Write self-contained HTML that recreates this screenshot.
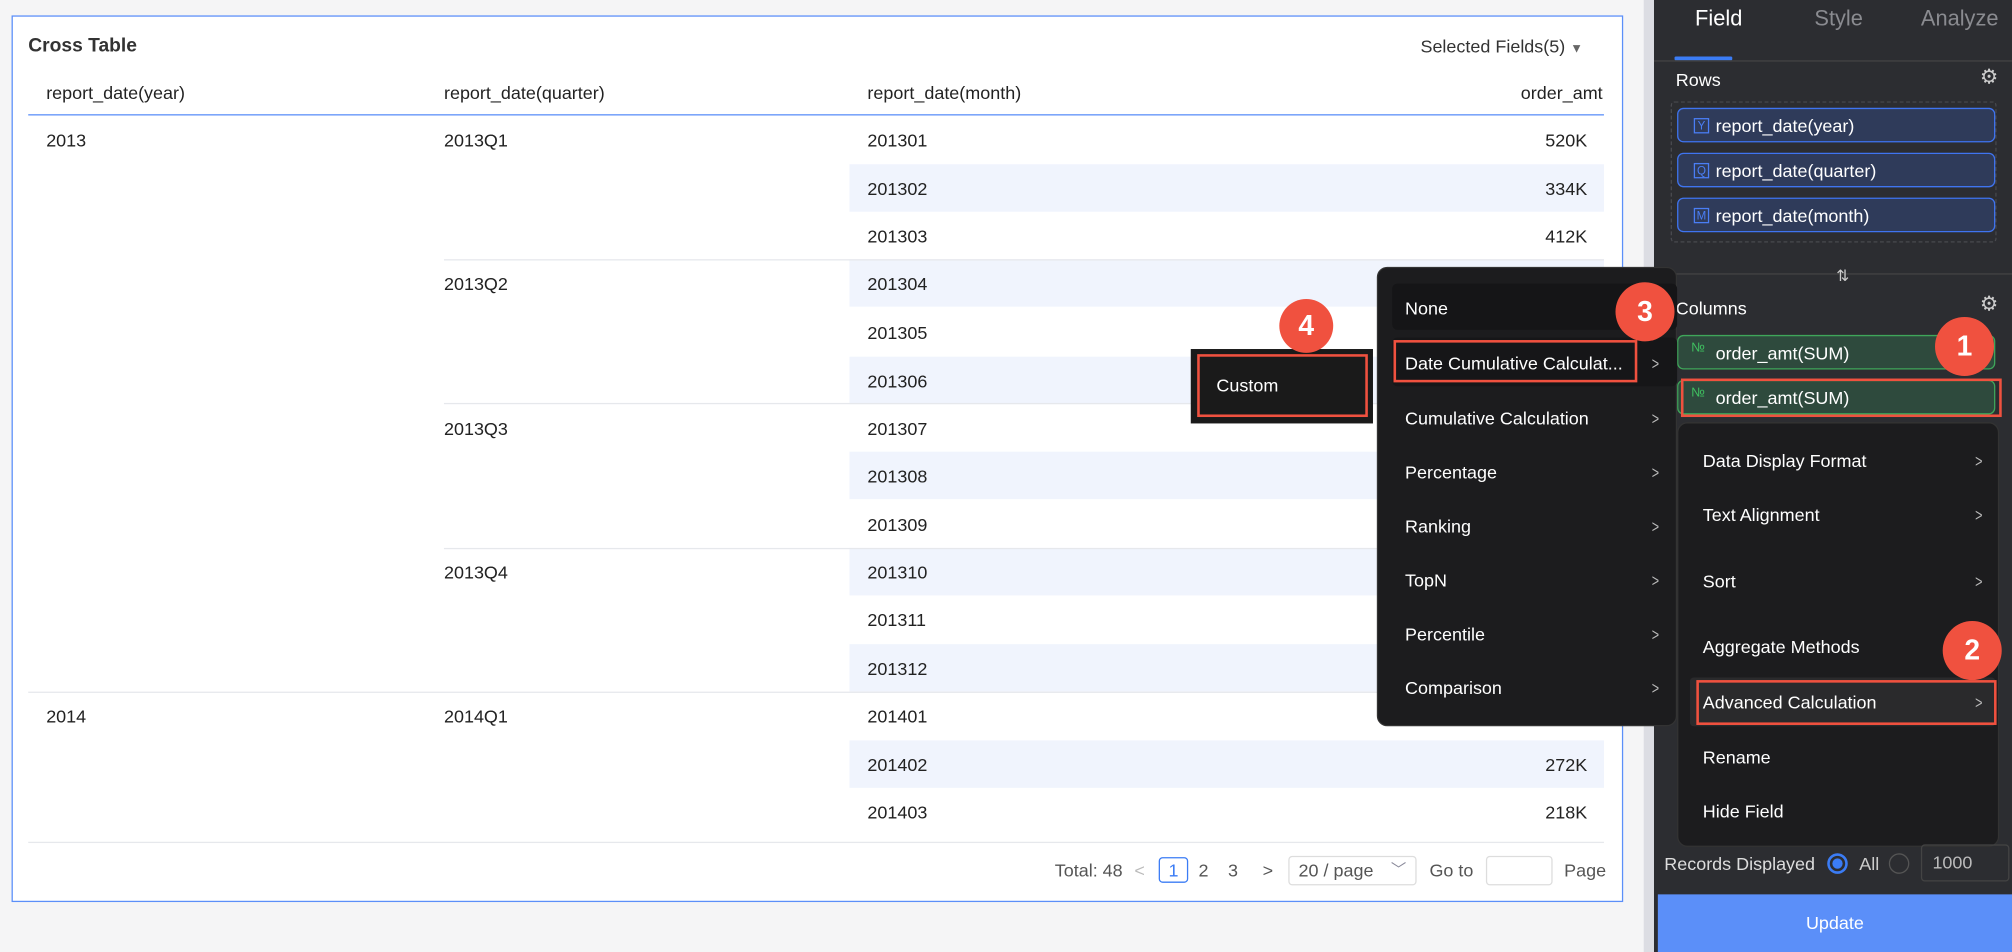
<!DOCTYPE html>
<html><head><meta charset="utf-8"><style>
*{margin:0;padding:0;box-sizing:border-box}
html,body{width:2012px;height:952px;overflow:hidden;background:#f5f5f6}
#w{position:absolute;left:0;top:0;width:1568px;height:742px;transform:scale(1.28316);transform-origin:0 0;font-family:"Liberation Sans",sans-serif;font-size:14px;color:#222}
.a{position:absolute;white-space:nowrap}
.t{position:absolute;white-space:nowrap;line-height:18px}
.sh{position:absolute;left:662px;width:588px;height:37px;background:#f0f4fd}
.hl{position:absolute;height:1px;background:#e6e8ec}
.pill{position:absolute;left:1307px;width:248px;height:27px;border-radius:5px;color:#fff;font-size:14px;line-height:27px;padding-left:29px}
.pb{background:#2f3b5a;border:1px solid #3f74f0}
.pg{background:#2e4a3d;border:1px solid #3fa65a}
.ic{position:absolute;left:12px;top:7px;width:12px;height:12px;border:1px solid #4a7ef5;color:#4a7ef5;font-size:9px;line-height:10px;text-align:center}
.no{position:absolute;left:10px;top:0;color:#3fc060;font-size:10px;line-height:20px}
.mi{position:absolute;color:#fff;font-size:14px;line-height:18px}
.ch{position:absolute;color:#bbb;font-size:14px;line-height:18px;transform:scaleX(.7)}
.bd{position:absolute;border-radius:50%;background:#f0513f;color:#fff;font-weight:bold;font-size:22px;text-align:center}
</style></head><body><div id="w">
<div class="a" style="left:9px;top:12px;width:1256px;height:691px;background:#fff;border:1px solid #5b8ff9"></div>
<div class="t" style="left:22px;top:27px;font-size:15px;font-weight:bold;color:#333">Cross Table</div>
<div class="t" style="left:1107px;top:27px;color:#333;font-size:14px">Selected Fields(5) <span style="font-size:10px;color:#666">▼</span></div>
<div class="t" style="left:36px;top:63px">report_date(year)</div>
<div class="t" style="left:346px;top:63px">report_date(quarter)</div>
<div class="t" style="left:676px;top:63px">report_date(month)</div>
<div class="t" style="left:1172px;top:63px;width:77px;text-align:right">order_amt</div>
<div class="a" style="left:22px;top:89px;width:1228px;height:1px;background:#5b8ff9"></div>
<div class="sh" style="top:128px"></div><div class="sh" style="top:202px"></div><div class="sh" style="top:278px"></div><div class="sh" style="top:352px"></div><div class="sh" style="top:427px"></div><div class="sh" style="top:502px"></div><div class="sh" style="top:577px"></div>
<div class="hl" style="left:346px;top:202px;width:904px"></div>
<div class="hl" style="left:346px;top:314px;width:904px"></div>
<div class="hl" style="left:346px;top:427px;width:904px"></div>
<div class="hl" style="left:22px;top:539px;width:1228px"></div>
<div class="hl" style="left:22px;top:656px;width:1228px"></div>
<div class="t" style="left:36px;top:100px">2013</div>
<div class="t" style="left:36px;top:549px">2014</div>
<div class="t" style="left:346px;top:100px">2013Q1</div>
<div class="t" style="left:346px;top:212px">2013Q2</div>
<div class="t" style="left:346px;top:325px">2013Q3</div>
<div class="t" style="left:346px;top:437px">2013Q4</div>
<div class="t" style="left:346px;top:549px">2014Q1</div>
<div class="t" style="left:676px;top:100px">201301</div><div class="t" style="left:676px;top:138px">201302</div><div class="t" style="left:676px;top:175px">201303</div><div class="t" style="left:676px;top:212px">201304</div><div class="t" style="left:676px;top:250px">201305</div><div class="t" style="left:676px;top:288px">201306</div><div class="t" style="left:676px;top:325px">201307</div><div class="t" style="left:676px;top:362px">201308</div><div class="t" style="left:676px;top:400px">201309</div><div class="t" style="left:676px;top:437px">201310</div><div class="t" style="left:676px;top:474px">201311</div><div class="t" style="left:676px;top:512px">201312</div><div class="t" style="left:676px;top:549px">201401</div><div class="t" style="left:676px;top:587px">201402</div><div class="t" style="left:676px;top:624px">201403</div>
<div class="t" style="left:1180px;top:100px;width:57px;text-align:right">520K</div>
<div class="t" style="left:1180px;top:138px;width:57px;text-align:right">334K</div>
<div class="t" style="left:1180px;top:175px;width:57px;text-align:right">412K</div>
<div class="t" style="left:1180px;top:587px;width:57px;text-align:right">272K</div>
<div class="t" style="left:1180px;top:624px;width:57px;text-align:right">218K</div>
<div class="t" style="left:822px;top:669px;color:#555">Total: 48</div>
<div class="t" style="left:884px;top:669px;color:#bbb">&lt;</div>
<div class="a" style="left:903px;top:668px;width:23px;height:20px;border:1px solid #3b7cf5;border-radius:3px;color:#3b7cf5;text-align:center;line-height:18px">1</div>
<div class="t" style="left:934px;top:669px;color:#555">2</div>
<div class="t" style="left:957px;top:669px;color:#555">3</div>
<div class="t" style="left:984px;top:669px;color:#555">&gt;</div>
<div class="a" style="left:1004px;top:667px;width:100px;height:23px;border:1px solid #ddd;border-radius:3px;color:#555;line-height:21px;padding-left:7px">20 / page <span style="position:absolute;right:7px;color:#889;font-size:12px">﹀</span></div>
<div class="t" style="left:1114px;top:669px;color:#555">Go to</div>
<div class="a" style="left:1158px;top:667px;width:52px;height:23px;border:1px solid #ddd;border-radius:3px"></div>
<div class="t" style="left:1219px;top:669px;color:#555">Page</div>
<!-- right panel -->
<div class="a" style="left:1281px;top:0;width:8px;height:742px;background:#dcdde3"></div>
<div class="a" style="left:1289px;top:0;width:279px;height:742px;background:#2c2d31"></div>
<div class="t" style="left:1321px;top:6px;color:#fff;font-size:17px">Field</div>
<div class="t" style="left:1414px;top:6px;color:#8a8b90;font-size:17px">Style</div>
<div class="t" style="left:1497px;top:6px;color:#8a8b90;font-size:17px">Analyze</div>
<div class="a" style="left:1305px;top:44px;width:45px;height:3px;background:#3b7cf5;border-radius:1px"></div>
<div class="a" style="left:1289px;top:47px;width:279px;height:1px;background:#444"></div>
<div class="t" style="left:1306px;top:53px;color:#fff">Rows</div>
<div class="t" style="left:1543px;top:52px;color:#ccc;font-size:16px">⚙</div>
<div class="a" style="left:1302px;top:106px;width:258px;height:138px"></div>
<div class="a" style="left:1302px;top:79px;width:254px;height:110px;border:1px dashed #4a4b50;border-radius:3px"></div>
<div class="pill pb" style="top:84px"><span class="ic">Y</span>report_date(year)</div>
<div class="pill pb" style="top:119px"><span class="ic">Q</span>report_date(quarter)</div>
<div class="pill pb" style="top:154px"><span class="ic">M</span>report_date(month)</div>
<div class="a" style="left:1289px;top:213px;width:279px;height:1px;background:#444"></div>
<div class="t" style="left:1431px;top:206px;color:#ccc;font-size:12px">⇅</div>
<div class="t" style="left:1306px;top:231px;color:#fff">Columns</div>
<div class="t" style="left:1543px;top:229px;color:#ccc;font-size:16px">⚙</div>
<div class="pill pg" style="top:261px"><span class="no">№</span>order_amt(SUM)</div>
<div class="pill pg" style="top:296px"><span class="no">№</span>order_amt(SUM)</div>
<div class="a" style="left:1310px;top:295px;width:250px;height:30px;border:2px solid #f0513f"></div>
<div class="bd" style="left:1508px;top:247px;width:46px;height:46px;line-height:46px">1</div>
<!-- context menu -->
<div class="a" style="left:1307px;top:329px;width:251px;height:331px;background:#1c1c1e;border-radius:8px;border:1px solid #333"></div>
<div class="mi" style="left:1327px;top:350px">Data Display Format</div><div class="ch" style="left:1538px;top:350px">&gt;</div>
<div class="mi" style="left:1327px;top:392px">Text Alignment</div><div class="ch" style="left:1538px;top:392px">&gt;</div>
<div class="mi" style="left:1327px;top:444px">Sort</div><div class="ch" style="left:1538px;top:444px">&gt;</div>
<div class="mi" style="left:1327px;top:495px">Aggregate Methods</div>
<div class="a" style="left:1317px;top:528px;width:238px;height:38px;background:#2a2a2c;border-radius:3px"></div>
<div class="a" style="left:1322px;top:530px;width:234px;height:35px;border:2px solid #f0513f"></div>
<div class="mi" style="left:1327px;top:538px">Advanced Calculation</div><div class="ch" style="left:1538px;top:538px">&gt;</div>
<div class="mi" style="left:1327px;top:581px">Rename</div>
<div class="mi" style="left:1327px;top:623px">Hide Field</div>
<div class="bd" style="left:1514px;top:484px;width:46px;height:46px;line-height:46px">2</div>
<div class="t" style="left:1297px;top:664px;color:#ddd">Records Displayed</div>
<div class="a" style="left:1424px;top:665px;width:16px;height:16px;border-radius:50%;border:2px solid #3b7cf5"><div style="margin:2px;width:8px;height:8px;border-radius:50%;background:#3b7cf5"></div></div>
<div class="t" style="left:1449px;top:664px;color:#ccc">All</div>
<div class="a" style="left:1472px;top:665px;width:16px;height:16px;border-radius:50%;border:1px solid #555"></div>
<div class="a" style="left:1497px;top:658px;width:69px;height:29px;border:1px solid #444;border-radius:3px;color:#bbb;line-height:27px;padding-left:8px">1000</div>
<div class="a" style="left:1292px;top:697px;width:276px;height:45px;background:#5b8ff9;color:#fff;text-align:center;line-height:45px">Update</div>
<!-- submenu -->
<div class="a" style="left:1073px;top:208px;width:234px;height:358px;background:#1c1c1e;border-radius:8px;border:1px solid #333"></div>
<div class="a" style="left:1085px;top:221px;width:222px;height:36px;background:#151517;border-radius:4px"></div>
<div class="mi" style="left:1095px;top:231px">None</div>
<div class="a" style="left:1085px;top:263px;width:222px;height:38px;background:#161618;border-radius:4px"></div>
<div class="a" style="left:1086px;top:265px;width:190px;height:33px;border:2px solid #f0513f"></div>
<div class="mi" style="left:1095px;top:274px">Date Cumulative Calculat...</div><div class="ch" style="left:1286px;top:274px">&gt;</div>
<div class="mi" style="left:1095px;top:317px">Cumulative Calculation</div><div class="ch" style="left:1286px;top:317px">&gt;</div>
<div class="mi" style="left:1095px;top:359px">Percentage</div><div class="ch" style="left:1286px;top:359px">&gt;</div>
<div class="mi" style="left:1095px;top:401px">Ranking</div><div class="ch" style="left:1286px;top:401px">&gt;</div>
<div class="mi" style="left:1095px;top:443px">TopN</div><div class="ch" style="left:1286px;top:443px">&gt;</div>
<div class="mi" style="left:1095px;top:485px">Percentile</div><div class="ch" style="left:1286px;top:485px">&gt;</div>
<div class="mi" style="left:1095px;top:527px">Comparison</div><div class="ch" style="left:1286px;top:527px">&gt;</div>
<div class="bd" style="left:1259px;top:220px;width:46px;height:46px;line-height:46px">3</div>
<div class="a" style="left:928px;top:272px;width:142px;height:58px;background:#1a1a1a"></div>
<div class="a" style="left:933px;top:276px;width:133px;height:49px;border:2px solid #f0513f"></div>
<div class="mi" style="left:948px;top:291px">Custom</div>
<div class="bd" style="left:997px;top:233px;width:42px;height:42px;line-height:42px">4</div>
</div></body></html>
